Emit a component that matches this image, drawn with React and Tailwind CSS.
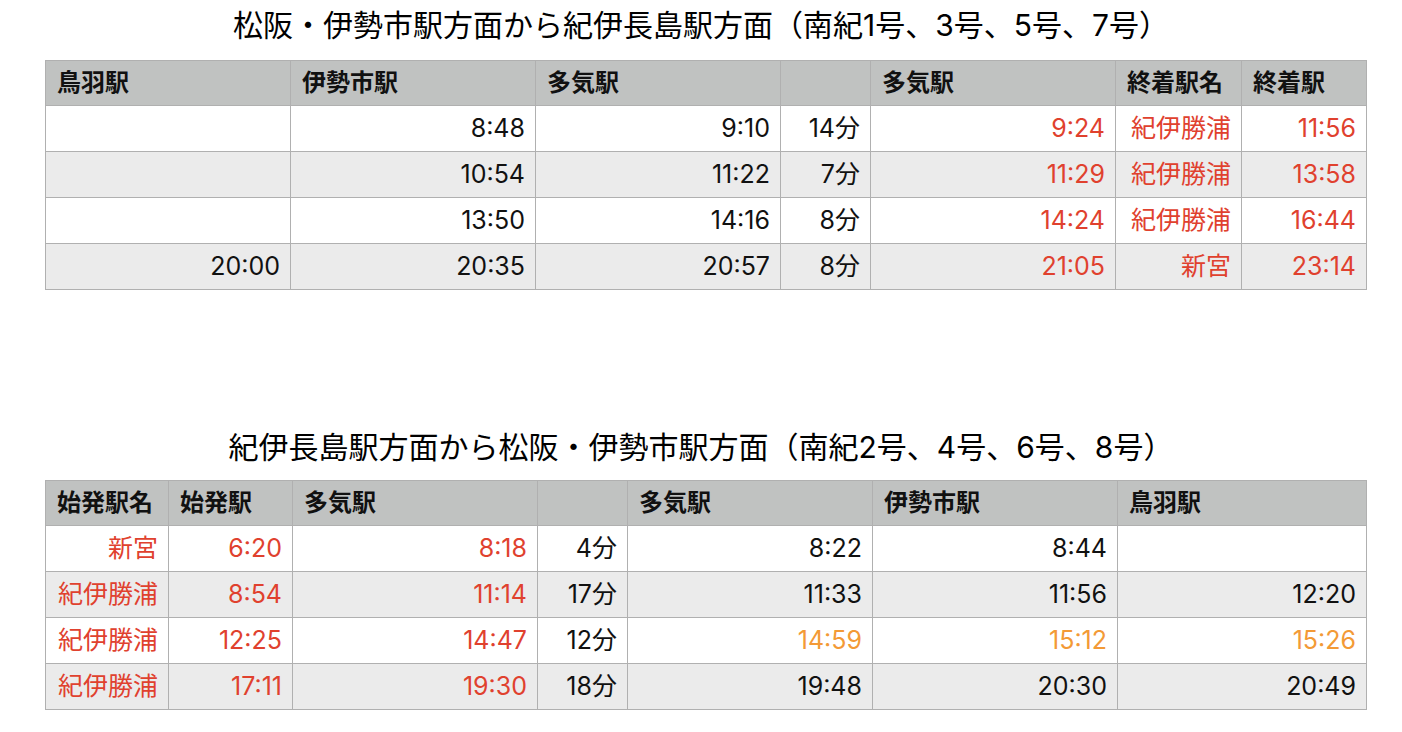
const RED = 'text-[#e0412e]'
const ORANGE = 'text-[#f39a36]'

const down = {
  title: '松阪・伊勢市駅方面から紀伊長島駅方面（南紀1号、3号、5号、7号）',
  widths: ['w-[245px]', 'w-[245px]', 'w-[245px]', 'w-[90px]', 'w-[245px]', 'w-[126px]', 'w-[125px]'],
  head: ['鳥羽駅', '伊勢市駅', '多気駅', '', '多気駅', '終着駅名', '終着駅'],
  rows: [
    [['', 0], ['8:48', 0], ['9:10', 0], ['14分', 0], ['9:24', 1], ['紀伊勝浦', 1], ['11:56', 1]],
    [['', 0], ['10:54', 0], ['11:22', 0], ['7分', 0], ['11:29', 1], ['紀伊勝浦', 1], ['13:58', 1]],
    [['', 0], ['13:50', 0], ['14:16', 0], ['8分', 0], ['14:24', 1], ['紀伊勝浦', 1], ['16:44', 1]],
    [['20:00', 0], ['20:35', 0], ['20:57', 0], ['8分', 0], ['21:05', 1], ['新宮', 1], ['23:14', 1]],
  ],
}

const up = {
  title: '紀伊長島駅方面から松阪・伊勢市駅方面（南紀2号、4号、6号、8号）',
  widths: ['w-[123px]', 'w-[124px]', 'w-[245px]', 'w-[90px]', 'w-[245px]', 'w-[245px]', 'w-[249px]'],
  head: ['始発駅名', '始発駅', '多気駅', '', '多気駅', '伊勢市駅', '鳥羽駅'],
  rows: [
    [['新宮', 1], ['6:20', 1], ['8:18', 1], ['4分', 0], ['8:22', 0], ['8:44', 0], ['', 0]],
    [['紀伊勝浦', 1], ['8:54', 1], ['11:14', 1], ['17分', 0], ['11:33', 0], ['11:56', 0], ['12:20', 0]],
    [['紀伊勝浦', 1], ['12:25', 1], ['14:47', 1], ['12分', 0], ['14:59', 2], ['15:12', 2], ['15:26', 2]],
    [['紀伊勝浦', 1], ['17:11', 1], ['19:30', 1], ['18分', 0], ['19:48', 0], ['20:30', 0], ['20:49', 0]],
  ],
}

function Timetable({ data, titleClass }) {
  return (
    <section className="flex flex-col">
      <h2 className={'text-center text-[30px] leading-[34px] text-black ' + titleClass}>{data.title}</h2>
      <table className="ml-[45px] w-[1321px] table-fixed border-collapse border border-[#b0b0b0]">
        <thead>
          <tr className="h-[45px] bg-[#c0c2c1] border-b border-[#333]">
            {data.head.map((h, i) => (
              <th
                key={i}
                className={'border-x border-[#b0b0b0] px-[11px] text-left align-middle text-[24px] font-bold text-[#111] ' + data.widths[i]}
              >
                {h}
              </th>
            ))}
          </tr>
        </thead>
        <tbody>
          {data.rows.map((row, r) => (
            <tr key={r} className={'h-[46px] ' + (r % 2 ? 'bg-[#ebebeb]' : 'bg-white')}>
              {row.map(([v, c], i) => (
                <td
                  key={i}
                  className={
                    'border border-[#b0b0b0] px-[10px] text-right align-middle text-[25px] ' +
                    (c === 1 ? RED : c === 2 ? ORANGE : 'text-[#111]')
                  }
                >
                  {v}
                </td>
              ))}
            </tr>
          ))}
        </tbody>
      </table>
    </section>
  )
}

export default function App() {
  return (
    <div className="min-h-screen w-[1402px] bg-white font-['Inter','Noto_Sans_CJK_JP',sans-serif]">
      <Timetable data={down} titleClass="pt-2 pb-[18px]" />
      <div className="h-[130px]" />
      <Timetable data={up} titleClass="pt-[10px] pb-4" />
    </div>
  )
}
